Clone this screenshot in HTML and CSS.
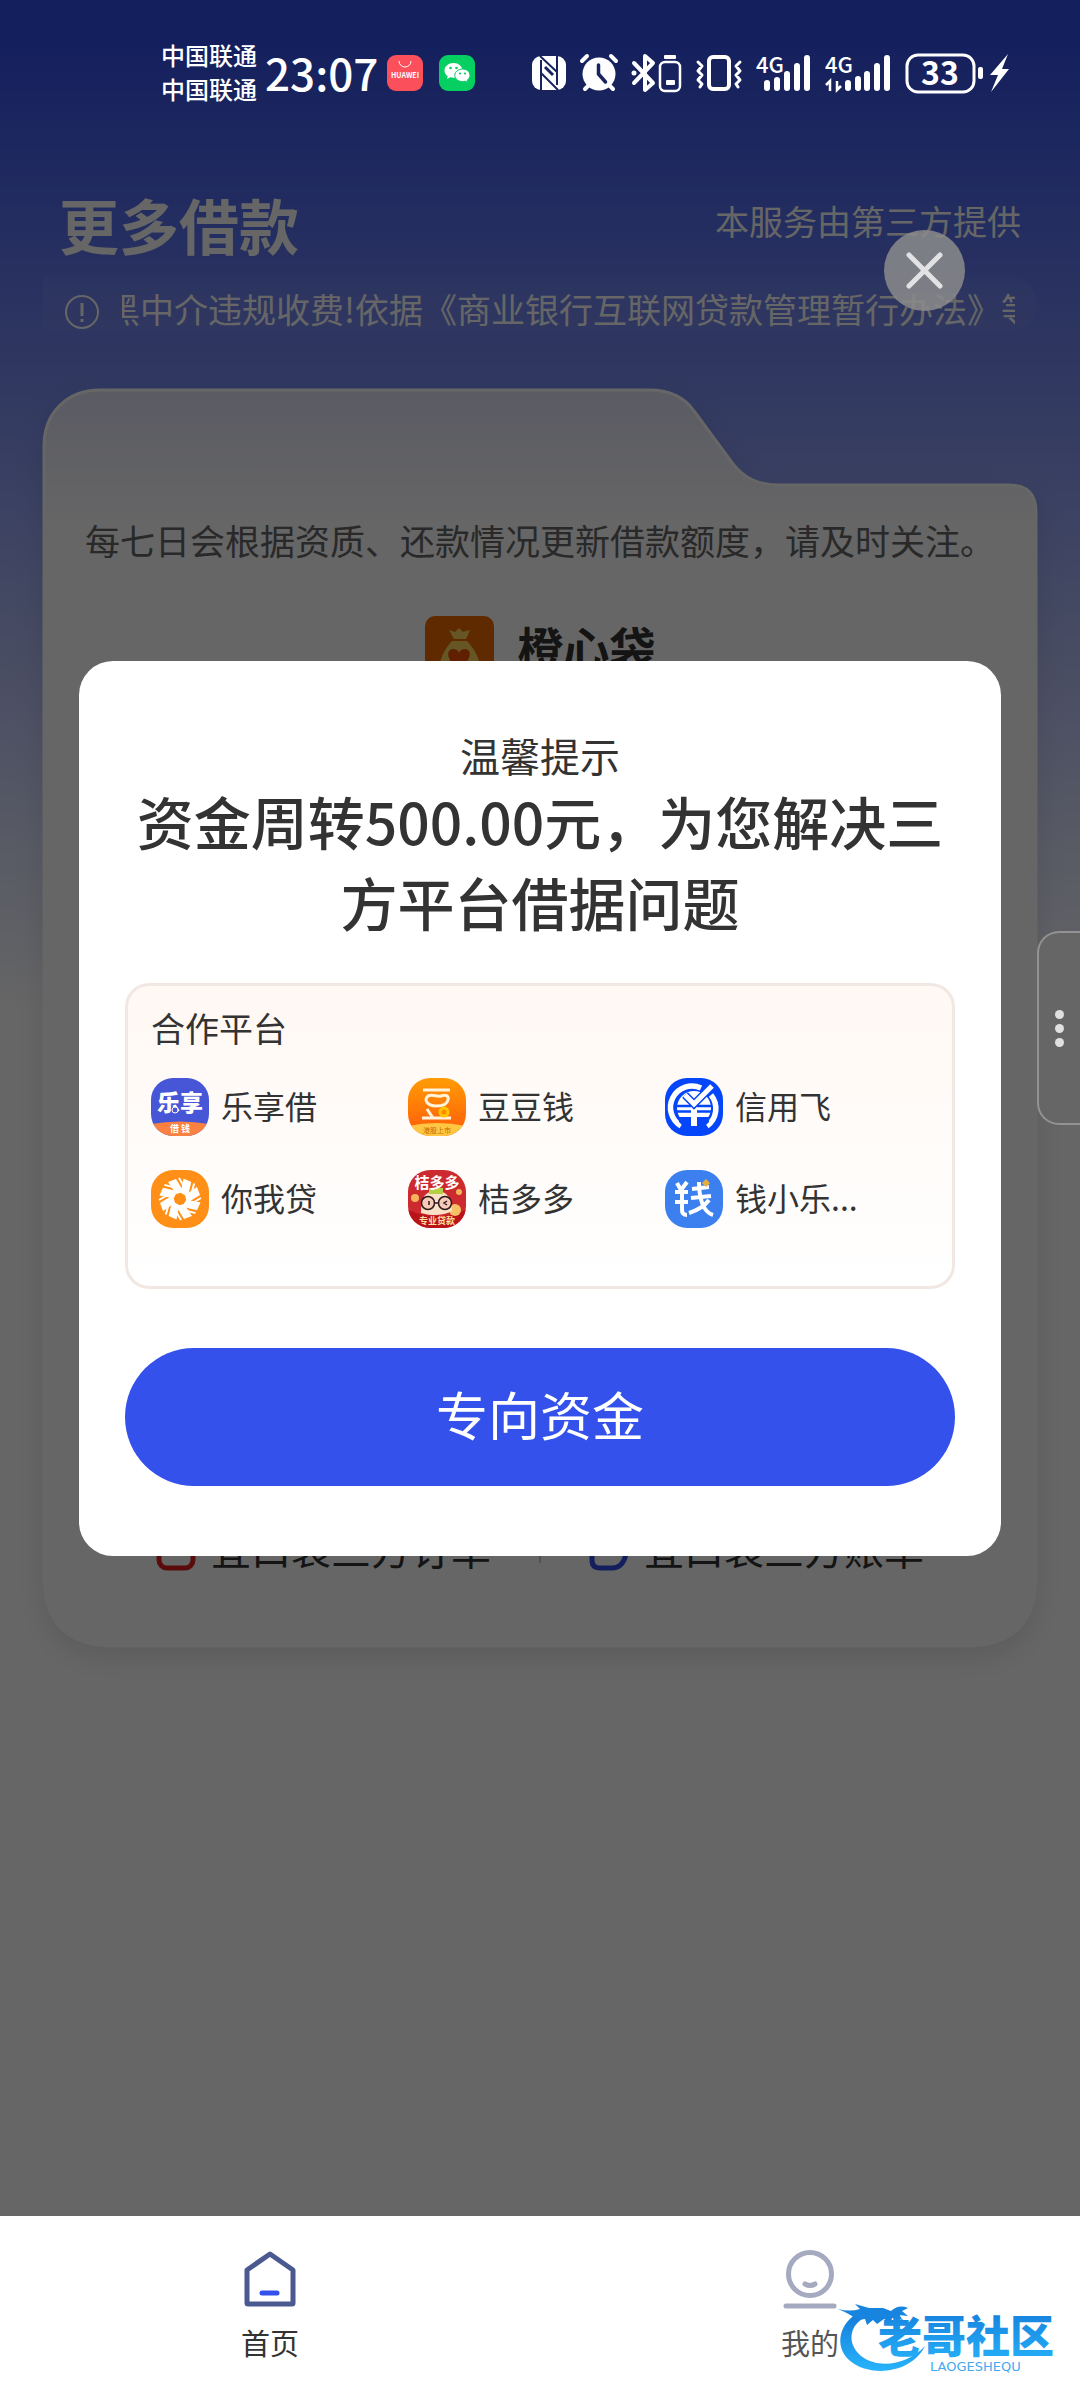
FILE: index.html
```
<!DOCTYPE html>
<html lang="zh-CN">
<head>
    <meta charset="UTF-8">
    <meta name="viewport" content="width=device-width, initial-scale=1.0">
    <title>更多借款</title>
    <link rel="stylesheet" href="styles.css">
</head>
<body>
    <div class="app">
        <div class="screen">
            <!-- 状态栏 -->
            <div class="status-bar">
                <div class="status-left">
                    <div class="carrier"><span>中国联通</span><span>中国联通</span></div>
                    <span class="clock">23:07</span>
                    <svg class="app-badge" viewBox="0 0 36 36">
                        <rect width="36" height="36" rx="9" fill="#fb4f5c"/>
                        <path d="M12 6a6 6 0 0 0 12 0" fill="none" stroke="#fff" stroke-width="1"/>
                        <text x="18" y="23" font-size="7" font-weight="600" text-anchor="middle" fill="#fff">HUAWEI</text>
                    </svg>
                    <svg class="app-badge" viewBox="0 0 36 36">
                        <rect width="36" height="36" rx="9" fill="#06cf62"/>
                        <path d="M14.500 8C9.500 8 5.500 11.300 5.500 15.500c0 2.400 1.300 4.500 3.300 5.800L8 24l3.300-1.700c1 .3 2.100.5 3.200.5 5 0 9-3.300 9-7.300S19.500 8 14.500 8z" fill="#fff"/>
                        <path d="M23.500 14c-4.300 0-7.700 2.800-7.700 6.300s3.400 6.300 7.700 6.300c.9 0 1.800-.1 2.600-.4l2.700 1.400-.7-2.300c1.800-1.200 2.900-3 2.900-5 0-3.500-3.300-6.300-7.500-6.300z" fill="#fff" stroke="#06cf62" stroke-width="1"/>
                        <g fill="#06cf62"><circle cx="11.500" cy="13" r="1.300"/><circle cx="17.500" cy="13" r="1.300"/><circle cx="21" cy="18.500" r="1.100"/><circle cx="26" cy="18.500" r="1.100"/></g>
                    </svg>
                </div>
                <div class="status-right">
                    <svg width="34" height="42" viewBox="0 0 34 42">
                        <rect y="4" width="34" height="34" rx="9" fill="#fff"/>
                        <path d="M9 8v30M25 4v29M8 4l17 16M9 21l17 17" stroke="#17245f" stroke-width="2" fill="none"/>
                        <path d="M13 15l8 8" stroke="#17245f" stroke-width="3"/>
                    </svg>
                    <svg width="38" height="42" viewBox="0 0 38 42">
                        <g stroke="#fff" stroke-linecap="round" stroke-width="4"><path d="M2 9l5-5M36 9l-5-5M8 34l-3 3M30 34l3 3"/></g>
                        <circle cx="19" cy="22" r="16.500" fill="#fff"/>
                        <path d="M18.500 13v9l7 8" fill="none" stroke="#17245f" stroke-width="3.500" stroke-linecap="round"/>
                    </svg>
                    <svg width="50" height="42" viewBox="0 0 50 42">
                        <path d="M2 11l19 20-8 7V4l8 7L2 31" fill="none" stroke="#fff" stroke-width="4" stroke-linejoin="round" stroke-linecap="round"/>
                        <circle cx="2" cy="21" r="2.500" fill="#fff"/>
                        <rect x="28" y="10" width="20" height="29" rx="5" fill="none" stroke="#fff" stroke-width="2.500"/>
                        <rect x="32" y="3" width="12" height="4" rx="1" fill="#fff"/>
                        <rect x="34" y="28" width="9" height="5" rx="1" fill="#fff"/>
                    </svg>
                    <svg width="46" height="42" viewBox="0 0 46 42">
                        <rect x="13" y="5" width="20" height="32" rx="4" fill="none" stroke="#fff" stroke-width="4"/>
                        <path d="M2 10l4 4-4 5 4 4-4 5 4 4-2 3M44 10l-4 4 4 5-4 4 4 5-4 4 2 3" fill="none" stroke="#fff" stroke-width="3" stroke-linejoin="round" stroke-linecap="round"/>
                    </svg>
                    <svg width="55" height="42" viewBox="0 0 55 42">
                        <text x="0" y="21" font-size="22" font-weight="500" fill="#fff">4G</text>
                        <path d="M11 31v5M21 28v8M31 22v14M41 14v22M51 6v30" stroke="#fff" stroke-width="6" stroke-linecap="round"/>
                    </svg>
                    <svg width="66" height="42" viewBox="0 0 66 42">
                        <text x="0" y="21" font-size="22" font-weight="500" fill="#fff">4G</text>
                        <path d="M23 31v5M33 27v9M42 22v14M52 14v22M62 6v30" stroke="#fff" stroke-width="6" stroke-linecap="round"/>
                        <path d="M5 39V29l-4 4M12 29v9l4-4" fill="none" stroke="#fff" stroke-width="2.500"/>
                    </svg>
                    <svg width="104" height="42" viewBox="0 0 104 42">
                        <rect x="2" y="3" width="67" height="37" rx="11" fill="none" stroke="#fff" stroke-width="3"/>
                        <rect x="73" y="15" width="5" height="12" rx="2" fill="#fff"/>
                        <text x="35" y="33" font-size="32" font-weight="700" text-anchor="middle" fill="#fff">33</text>
                        <path d="M103 2L85 23h8l-7 17 18-23h-7l6-15z" fill="#fff"/>
                    </svg>
                </div>
            </div>

            <!-- 页面主体 -->
            <div class="page">
                <div class="page-header">
                    <h1>更多借款</h1>
                    <span class="service-tip">本服务由第三方提供</span>
                </div>
                <div class="notice">
                    <svg class="notice-icon" viewBox="0 0 34 34" fill="none" stroke="#fff" stroke-width="2">
                        <circle cx="17" cy="17" r="16"/>
                        <path d="M17 8v13M17 24v3" stroke-width="3"/>
                    </svg>
                    <div class="notice-text">黑中介违规收费!依据《商业银行互联网贷款管理暂行办法》等</div>
                </div>

                <div class="card">
                    <svg class="card-shape" viewBox="0 0 994 1258" preserveAspectRatio="none">
                        <defs>
                            <linearGradient id="cardFill" x1="0" y1="0" x2="0" y2="1">
                                <stop offset="0" stop-color="#e2e4f8"/>
                                <stop offset="0.11" stop-color="#ffffff"/>
                            </linearGradient>
                        </defs>
                        <path d="M1 57C1 24 24 1 57 1H606C628 1 642 9 651 22L690 75C701 89 715 96 737 96H966Q993 96 993 123V1187Q993 1257 923 1257H71Q1 1257 1 1187Z" fill="url(#cardFill)" stroke="#ffffff" stroke-width="3"/>
                    </svg>
                    <p class="card-tip">每七日会根据资质、还款情况更新借款额度，请及时关注。</p>
                    <div class="brand">
                        <svg class="brand-icon" viewBox="0 0 69 69">
                            <rect width="69" height="69" rx="10" fill="#f06a00"/>
                            <path d="M24 14l6 2 4-4 4 4 7-2-4 9H29z" fill="#ffd860"/>
                            <path d="M27 25h15c9 10 14 20 13 31H14c0-11 4-21 13-31z" fill="#ffd860"/>
                            <path d="M34 53c-12-8-14-19-6-20 3 0 5 1 6 4 1-3 3-4 6-4 8 1 6 12-6 20z" fill="#f04e00"/>
                        </svg>
                        <span>橙心袋</span>
                    </div>
                    <div class="links">
                        <a href="#" class="link">
                            <svg viewBox="0 0 40 46" fill="none" stroke="#e02020" stroke-width="5"><rect x="3" y="3" width="34" height="40" rx="8"/><path d="M11 20h12" stroke-width="6"/></svg>
                            宜口袋三方订单
                        </a>
                        <span class="divider"></span>
                        <a href="#" class="link">
                            <svg viewBox="0 0 40 46" fill="none" stroke="#3452eb" stroke-width="5"><path d="M11 3h18q8 0 8 8v18Q34 43 23 43H11q-8 0-8-8V11q0-8 8-8z"/><path d="M13 20h10" stroke-width="6"/></svg>
                            宜口袋三方账单
                        </a>
                    </div>
                </div>
            </div>

            <!-- 弹窗 -->
            <div class="mask">
                <div class="modal" role="dialog" aria-labelledby="modalTitle">
                    <div class="modal-label" id="modalTitle">温馨提示</div>
                    <h2>资金周转500.00元，为您解决三方平台借据问题</h2>
                    <div class="partners">
                        <h3>合作平台</h3>
                        <ul>
                            <li>
                                <svg viewBox="0 0 58 58">
                                    <defs><clipPath id="iconClip"><rect width="58" height="58" rx="22"/></clipPath></defs>
                                    <g clip-path="url(#iconClip)">
                                        <rect width="58" height="58" fill="#4656d6"/>
                                        <path d="M0 46q29-5 58 0v12H0z" fill="#fb8140"/>
                                        <text x="29" y="33" font-size="23" font-weight="900" text-anchor="middle" fill="#fff">乐享</text>
                                        <circle cx="24" cy="32" r="3" fill="#4656d6" stroke="#fff"/>
                                        <text x="29" y="54" font-size="9" font-weight="700" text-anchor="middle" fill="#fff">借 钱</text>
                                    </g>
                                </svg>
                                <span>乐享借</span>
                            </li>
                            <li>
                                <svg viewBox="0 0 58 58">
                                    <defs><linearGradient id="beanFill" x1="0" y1="0" x2="0" y2="1"><stop offset="0" stop-color="#ff9c05"/><stop offset="1" stop-color="#ff5a0a"/></linearGradient></defs>
                                    <g clip-path="url(#iconClip)">
                                        <rect width="58" height="58" fill="url(#beanFill)"/>
                                        <path d="M0 48q29-6 58 0v10H0z" fill="#ffc642"/>
                                        <g fill="none" stroke="#fff3dc" stroke-width="3" stroke-linejoin="round">
                                            <path d="M15 12h27M14 40h29M19 31l6 9"/>
                                            <path d="M20 18c5-2 9 1 13 0 5-2 8 0 7 4-1 5-6 6-12 6-8 0-13-6-8-10z"/>
                                        </g>
                                        <circle cx="36" cy="34" r="4" fill="#ff8a00" stroke="#ffc400" stroke-width="3"/>
                                        <text x="29" y="55" font-size="7" text-anchor="middle" fill="#c96a00">港股上市</text>
                                    </g>
                                </svg>
                                <span>豆豆钱</span>
                            </li>
                            <li>
                                <svg viewBox="0 0 58 58">
                                    <rect width="58" height="58" rx="22" fill="#0546fb"/>
                                    <path d="M16 48A21.500 21.500 0 0 1 36 10M46 17A21.500 21.500 0 0 1 42 48" fill="none" stroke="#fff" stroke-width="5.500"/>
                                    <circle cx="29" cy="30" r="17" fill="#fff"/>
                                    <path d="M11 28h36M11 33.500h36" stroke="#0546fb" stroke-width="2.500"/>
                                    <path d="M14 39h12v10h6V39H44v5l-8 8H22l-8-8z" fill="#0546fb"/>
                                    <path d="M29 28v20" stroke="#fff" stroke-width="6"/>
                                    <path d="M20 17l9 9L47 8" fill="none" stroke="#0546fb" stroke-width="8"/>
                                    <path d="M20 17l9 9L47 8" fill="none" stroke="#fff" stroke-width="5"/>
                                </svg>
                                <span>信用飞</span>
                            </li>
                            <li>
                                <svg viewBox="0 0 58 58">
                                    <defs>
                                        <g id="blade">
                                            <path d="M25 24l-8-12 8-3 8 13z" fill="#fff"/>
                                            <path d="M28 8l7 12" stroke="#fff" stroke-width="2"/>
                                        </g>
                                    </defs>
                                    <rect width="58" height="58" rx="22" fill="#ff8f17"/>
                                    <use href="#blade"/>
                                    <use href="#blade" transform="rotate(45 29 29)"/>
                                    <use href="#blade" transform="rotate(90 29 29)"/>
                                    <use href="#blade" transform="rotate(135 29 29)"/>
                                    <use href="#blade" transform="rotate(180 29 29)"/>
                                    <use href="#blade" transform="rotate(225 29 29)"/>
                                    <use href="#blade" transform="rotate(270 29 29)"/>
                                    <use href="#blade" transform="rotate(315 29 29)"/>
                                    <path d="M29 24l1 3 3-1-1 3 2 2-3 1-2 3-2-3-3-1 1-3-1-3 4 1z" fill="#ff8f17"/>
                                </svg>
                                <span>你我贷</span>
                            </li>
                            <li>
                                <svg viewBox="0 0 58 58">
                                    <g clip-path="url(#iconClip)">
                                        <rect width="58" height="58" fill="#cc2a2e"/>
                                        <path d="M0 40q29 12 58 0v18H0z" fill="#b8141a"/>
                                        <circle cx="7" cy="28" r="4" fill="#f4b45c"/>
                                        <circle cx="47" cy="40" r="6" fill="#f6c067"/>
                                        <circle cx="51" cy="22" r="3" fill="#f4b45c"/>
                                        <path d="M13 43c0-18 6-22 15-22s16 5 16 20c-8 5-22 5-31 2z" fill="#fbe0c8"/>
                                        <path d="M21 18h14v6H21z" fill="#b6cf46"/>
                                        <text x="29" y="18" font-size="15" font-weight="700" text-anchor="middle" fill="#fff">桔多多</text>
                                        <g fill="#f7c9b8" stroke="#2b1a1a" stroke-width="1.500"><circle cx="20" cy="33" r="6.500"/><circle cx="37" cy="33" r="6.500"/><path d="M26.500 33h4M21 31v4M39 31l-3 2 3 2"/></g>
                                        <text x="29" y="54" font-size="9" font-weight="700" text-anchor="middle" fill="#ffdf9e">专业贷款</text>
                                    </g>
                                </svg>
                                <span>桔多多</span>
                            </li>
                            <li>
                                <svg viewBox="0 0 58 58">
                                    <rect width="58" height="58" rx="22" fill="#3b80ee"/>
                                    <g fill="none" stroke="#fff" stroke-width="4" stroke-linejoin="round">
                                        <path d="M12 13l4 7 6-8M10 22h13M10 32h13M17 20v20q0 5 5 5"/>
                                        <path d="M27 19l17-2M26 28l20-2M34 12c0 16 4 30 14 33M44 30c-5 7-11 10-20 13"/>
                                    </g>
                                    <path d="M41 9l4 4-4 4-4-4z" fill="#e9ad3c"/>
                                </svg>
                                <span>钱小乐...</span>
                            </li>
                        </ul>
                    </div>
                    <button type="button" class="submit">专向资金</button>
                </div>
                <button type="button" class="close" aria-label="关闭">
                    <svg viewBox="0 0 81 81"><path d="M25 25l31 31M56 25L25 56" stroke="#e2e2e4" stroke-width="5" stroke-linecap="round"/></svg>
                </button>
                <button type="button" class="side-tab" aria-label="更多">
                    <span></span><span></span><span></span>
                </button>
            </div>
        </div>

        <!-- 底部导航 -->
        <nav class="tabbar">
            <a href="#" class="tab active">
                <svg viewBox="0 0 58 60" fill="none" stroke-width="5" stroke-linejoin="round" stroke-linecap="round">
                    <path d="M6 21L29 5l23 16v33q0 1-1 1H7q-1 0-1-1z" stroke="#4a5990"/>
                    <path d="M21 44h15" stroke="#3452eb"/>
                </svg>
                首页
            </a>
            <a href="#" class="tab">
                <svg viewBox="0 0 58 60" fill="none" stroke="#a5aac0" stroke-width="5" stroke-linecap="round">
                    <circle cx="29" cy="25" r="21.500"/>
                    <path d="M24 35q5 3 10 0M5 57h48"/>
                </svg>
                我的
            </a>
            <svg class="watermark" width="226" height="80" viewBox="0 0 226 80">
                <defs><linearGradient id="wm" x1="0" y1="0" x2="0" y2="1"><stop offset="0" stop-color="#1479d8"/><stop offset="1" stop-color="#27b4fb"/></linearGradient></defs>
                <path d="M22 12C1 22-4 46 11 60c20 18 62 14 76-14-16 18-46 24-64 10C7 42 12 22 32 15z" fill="url(#wm)"/>
                <path d="M0 9q12 3 22 0l-5-5 14 4h14l8 3q8-7 17-3l-6 3 6 5-9-1 4 5-11-2-1 5-7-4-7 5-4-4-6 5-2-6-7 1q-8-6-20-11z" fill="#1784df"/>
                <text x="40" y="53" font-size="44" font-weight="900" fill="url(#wm)">老哥社区</text>
                <text x="92" y="71" class="watermark-sub" font-size="13" fill="#45a9ee">LAOGESHEQU</text>
            </svg>
        </nav>
    </div>
</body>
</html>
```
FILE: styles.css
```
* {
    box-sizing: border-box;
}
body {
    margin: 0;
    font-family: "Noto Sans CJK SC", sans-serif;
    color: #333333;
    background: #ffffff;
}
h1, h2, h3, p, ul {
    margin: 0;
    padding: 0;
}
ul {
    list-style: none;
}
a {
    color: inherit;
    text-decoration: none;
}
button {
    font-family: inherit;
    border: none;
    padding: 0;
    cursor: pointer;
}
svg {
    display: block;
    flex: none;
    overflow: visible;
}
.app {
    display: flex;
    flex-direction: column;
    min-height: 100vh;
}
.screen {
    position: relative;
    flex: 1;
    background: linear-gradient(180deg, #3350eb 0, #3350eb 40px, #ffffff 1010px);
}

/* 状态栏 */
.status-bar {
    position: relative;
    z-index: 2;
    display: flex;
    justify-content: space-between;
    align-items: center;
    height: 146px;
    padding: 0 71px 0 161px;
    color: #ffffff;
}
.status-left, .status-right {
    display: flex;
    align-items: center;
}
.status-right {
    gap: 14px;
}
.carrier {
    display: flex;
    flex-direction: column;
    padding-bottom: 2px;
    font-size: 24px;
    font-weight: 500;
    line-height: 34px;
}
.clock {
    margin: 0 9px 0 8px;
    padding-bottom: 2px;
    font-size: 44px;
    font-weight: 500;
    line-height: 50px;
}
.app-badge {
    width: 36px;
    height: 36px;
    margin-right: 16px;
}

/* 页面主体 */
.page {
    padding: 46px 43px 0;
}
.page-header {
    display: flex;
    justify-content: space-between;
    padding: 0 16px;
    color: #ffffff;
}
.page-header h1 {
    font-size: 60px;
    font-weight: 700;
    line-height: 64px;
}
.service-tip {
    font-size: 34px;
    line-height: 58px;
}
.notice {
    display: flex;
    align-items: flex-end;
    gap: 23px;
    margin-top: 21px;
    padding: 12px 22px 2px;
    border-radius: 0 27px 27px 0;
    background: rgba(255, 255, 255, 0.05);
    color: #ffffff;
}
.notice-icon {
    width: 34px;
    height: 34px;
}
.notice-text {
    flex: 1;
    overflow: hidden;
    font-size: 34px;
    line-height: 40px;
    text-indent: -16px;
    white-space: nowrap;
}
.card {
    position: relative;
    display: flex;
    flex-direction: column;
    align-items: center;
    min-height: 1258px;
    margin-top: 58px;
    padding: 126px 20px 74px;
}
.card-shape {
    position: absolute;
    top: 0;
    left: 0;
    width: 100%;
    height: 100%;
    filter: drop-shadow(0 10px 14px rgba(0, 0, 0, 0.1));
}
.card-tip, .brand, .links {
    position: relative;
}
.card-tip {
    font-size: 35px;
    line-height: 50px;
    color: #666666;
}
.brand {
    display: flex;
    align-items: center;
    gap: 24px;
    margin-top: 51px;
    font-size: 46px;
    font-weight: 700;
    line-height: 50px;
}
.brand span {
    padding-bottom: 10px;
}
.brand-icon {
    width: 69px;
    height: 69px;
}
.links {
    display: flex;
    align-items: center;
    gap: 48px;
    margin-top: auto;
}
.link {
    display: flex;
    align-items: center;
    gap: 15px;
    font-size: 40px;
    line-height: 50px;
}
.link svg {
    width: 40px;
    height: 46px;
}
.divider {
    width: 2px;
    height: 30px;
    background: #cccccc;
}

/* 弹窗 */
.mask {
    position: absolute;
    top: 0;
    right: 0;
    bottom: 0;
    left: 0;
    z-index: 1;
    display: flex;
    justify-content: center;
    align-items: center;
    padding: 0 79px;
    background: rgba(0, 0, 0, 0.6);
}
.modal {
    flex: 1;
    padding: 69px 46px 70px;
    border-radius: 34px;
    background: #ffffff;
}
.modal-label {
    font-size: 40px;
    line-height: 50px;
    text-align: center;
}
.modal h2 {
    font-size: 57px;
    font-weight: 500;
    line-height: 81px;
    text-align: center;
}
.partners {
    margin-top: 41px;
    padding: 17px 30px 58px 23px;
    border: 3px solid #f1e8e3;
    border-radius: 24px;
    background: linear-gradient(180deg, #fff8f3, #ffffff);
}
.partners h3 {
    font-size: 34px;
    font-weight: 400;
    line-height: 50px;
}
.partners ul {
    display: grid;
    grid-template-columns: 1fr 1fr 1fr;
    gap: 34px 0;
    margin-top: 25px;
}
.partners li {
    display: flex;
    align-items: center;
    gap: 12px;
    font-size: 32px;
    line-height: 50px;
}
.partners li span {
    padding-bottom: 4px;
}
.partners li svg {
    width: 58px;
    height: 58px;
}
.submit {
    display: block;
    width: 100%;
    height: 138px;
    margin-top: 59px;
    padding-bottom: 6px;
    border-radius: 69px;
    background: #3452eb;
    color: #ffffff;
    font-size: 52px;
}
.close {
    position: absolute;
    top: 230px;
    right: 115px;
    width: 81px;
    height: 81px;
    border-radius: 50%;
    background: rgba(140, 140, 140, 0.85);
}
.side-tab {
    position: absolute;
    top: 931px;
    right: 0;
    display: flex;
    flex-direction: column;
    justify-content: center;
    align-items: center;
    gap: 5px;
    width: 43px;
    height: 194px;
    border: 2px solid #929292;
    border-right: none;
    border-radius: 22px 0 0 22px;
    background: #666666;
}
.side-tab span {
    width: 9px;
    height: 9px;
    border-radius: 50%;
    background: #e0e0e0;
}

/* 底部导航 */
.tabbar {
    position: relative;
    display: flex;
    height: 184px;
    background: #ffffff;
}
.tab {
    flex: 1;
    display: flex;
    flex-direction: column;
    align-items: center;
    gap: 13px;
    padding-top: 33px;
    font-size: 29px;
    line-height: 40px;
    color: #555555;
}
.tab.active {
    color: #333333;
}
.tab svg {
    width: 58px;
    height: 60px;
}
.watermark {
    position: absolute;
    right: 16px;
    bottom: 20px;
}
.watermark-sub {
    font-family: "DejaVu Sans", sans-serif;
}
```
